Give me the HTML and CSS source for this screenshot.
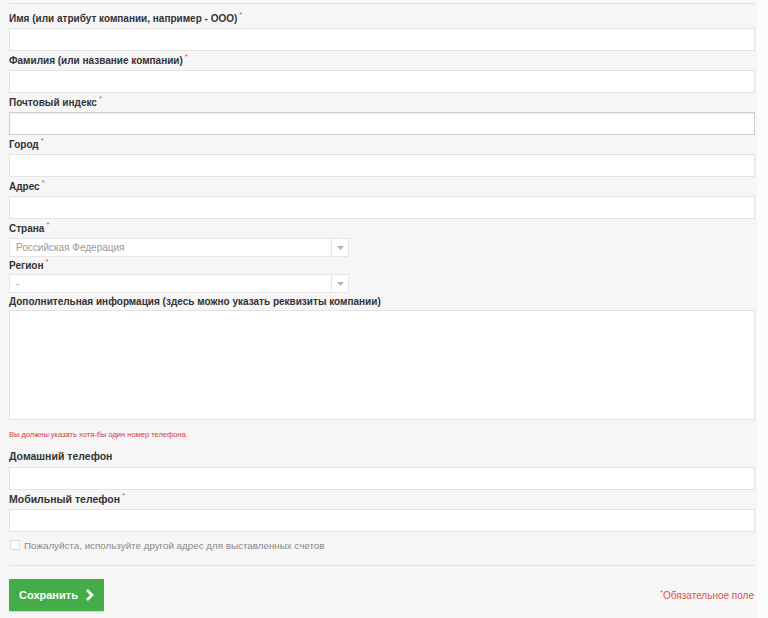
FILE: index.html
```html
<!DOCTYPE html>
<html lang="ru">
<head>
    <meta charset="UTF-8">
    <title>Адрес доставки</title>
    <link rel="stylesheet" href="styles.css">
</head>
<body>
    <div class="panel">
        <div class="rule rule-top"></div>

        <form class="address-form">
            <div class="field">
                <label>Имя (или атрибут компании, например - ООО)<sup>*</sup></label>
                <input type="text" class="text-input">
            </div>
            <div class="field">
                <label>Фамилия (или название компании)<sup>*</sup></label>
                <input type="text" class="text-input">
            </div>
            <div class="field">
                <label>Почтовый индекс<sup>*</sup></label>
                <input type="text" class="text-input focused">
            </div>
            <div class="field">
                <label>Город<sup>*</sup></label>
                <input type="text" class="text-input">
            </div>
            <div class="field">
                <label>Адрес<sup>*</sup></label>
                <input type="text" class="text-input">
            </div>
            <div class="field field-select field-country">
                <label>Страна<sup>*</sup></label>
                <div class="select-box">
                    <span class="select-value">Российская Федерация</span>
                    <span class="select-arrow"><svg width="7" height="4" viewBox="0 0 7 4"><path d="M0 0h7L3.5 4z" fill="#b5b5b5"/></svg></span>
                </div>
            </div>
            <div class="field field-select">
                <label>Регион<sup>*</sup></label>
                <div class="select-box">
                    <span class="select-value">-</span>
                    <span class="select-arrow"><svg width="7" height="4" viewBox="0 0 7 4"><path d="M0 0h7L3.5 4z" fill="#b5b5b5"/></svg></span>
                </div>
            </div>
            <div class="field field-notes">
                <label>Дополнительная информация (здесь можно указать реквизиты компании)</label>
                <textarea class="text-area"></textarea>
            </div>

            <p class="phone-note">Вы должны указать хотя-бы один номер телефона.</p>

            <div class="field field-phone">
                <label>Домашний телефон</label>
                <input type="text" class="text-input">
            </div>
            <div class="field field-phone">
                <label>Мобильный телефон<sup>*</sup></label>
                <input type="text" class="text-input">
            </div>

            <div class="checkbox-row">
                <span class="checkbox"></span>
                <span>Пожалуйста, используйте другой адрес для выставленных счетов</span>
            </div>

            <div class="rule rule-bottom"></div>

            <div class="form-footer">
                <button type="button" class="btn-save">
                    Сохранить
                    <svg width="9" height="12" viewBox="0 0 9 12"><path d="M2 1l5 5-5 5" fill="none" stroke="#fff" stroke-width="2.6"/></svg>
                </button>
                <span class="required-note"><sup>*</sup>Обязательное поле</span>
            </div>
        </form>
    </div>
</body>
</html>
```

FILE: styles.css
```css
body {
    margin: 0;
    background-color: #fbfbfb;
    font-family: "Liberation Sans", Arial, sans-serif;
    color: #333;
}
.panel {
    width: 746px;
    min-height: 618px;
    padding: 3px 2px 0 9px;
    background-color: #f6f6f6;
}
.rule {
    height: 1px;
    background-color: #e2e2e2;
}
.field {
    display: flex;
    flex-direction: column;
}
.field label {
    font-size: 10px;
    font-weight: bold;
    color: #333;
    height: 19px;
    line-height: 19px;
}
.field label sup {
    color: #d9534f;
    font-size: 8px;
    font-weight: normal;
    margin-left: 2px;
    vertical-align: 5px;
    line-height: 0;
}
.address-form > .field:first-child label {
    margin-top: 5px;
}
.text-input {
    box-sizing: border-box;
    height: 23px;
    margin: 0;
    border: 1px solid #e3e3e3;
    background-color: #fff;
    outline: none;
}
.text-input.focused {
    border-color: #d0d0d0;
    box-shadow: inset 0 1px 2px rgba(0,0,0,0.08);
}
.field-select label {
    height: 17px;
    line-height: 17px;
}
.field-country label {
    height: 19px;
    line-height: 19px;
}
.select-box {
    box-sizing: border-box;
    width: 340px;
    height: 19px;
    display: flex;
    align-items: center;
    border: 1px solid #e6e6e6;
    background-color: #fff;
}
.select-value {
    flex: 1;
    padding-left: 6px;
    font-size: 10px;
    color: #9a9a9a;
}
.select-arrow {
    width: 16px;
    height: 17px;
    border-left: 1px solid #e6e6e6;
    display: flex;
    align-items: center;
    justify-content: center;
}
.field-notes label {
    height: 17px;
    line-height: 17px;
}
.text-area {
    box-sizing: border-box;
    height: 110px;
    margin: 0;
    border: 1px solid #e3e3e3;
    background-color: #fff;
    resize: none;
}
.phone-note {
    margin: 10px 0 0;
    font-size: 7.5px;
    color: #d33a3a;
    height: 10px;
}
.field-phone label {
    font-size: 10.5px;
    height: 22px;
    line-height: 22px;
}
.field-phone + .field-phone label {
    height: 19px;
    line-height: 19px;
}
.phone-note + .field-phone {
    margin-top: 5px;
}
.checkbox-row {
    display: flex;
    align-items: center;
    gap: 4px;
    margin-top: 5px;
    height: 16px;
    font-size: 9.8px;
    color: #888;
}
.checkbox {
    width: 8px;
    height: 8px;
    border: 1px solid #dcdcdc;
    background-color: #fdfdfd;
    margin-left: 1px;
}
.rule-bottom {
    margin-top: 12px;
}
.form-footer {
    display: flex;
    align-items: center;
    justify-content: space-between;
    margin-top: 13px;
}
.btn-save {
    display: flex;
    align-items: center;
    gap: 7px;
    height: 32px;
    padding: 0 10px 0 10px;
    border: none;
    border-radius: 1px;
    background-color: #45ac4a;
    box-shadow: 0 1px 1px rgba(0,0,0,0.15);
    color: #fff;
    font-family: "Liberation Sans", Arial, sans-serif;
    font-size: 11px;
    font-weight: bold;
}
.required-note {
    font-size: 10px;
    color: #d9534f;
    margin-right: 1px;
}
.required-note sup {
    font-size: 7px;
    vertical-align: 4px;
    line-height: 0;
}
```
